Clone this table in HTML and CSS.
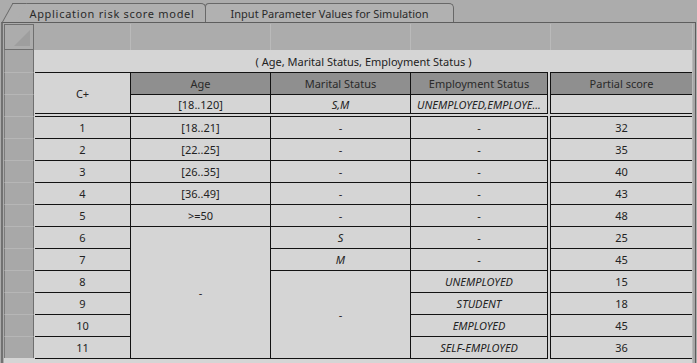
FILE: index.html
```html
<!DOCTYPE html>
<html>
<head>
<meta charset="utf-8">
<title>Application risk score model</title>
<link rel="stylesheet" href="styles.css">
</head>
<body>
<div class="tabs">
  <div class="tab tab-active">Application risk score model</div>
  <div class="tab tab-other">Input Parameter Values for Simulation</div>
</div>
<div class="frame">
  <div class="sheet">
    <div class="corner"><svg width="16" height="16" viewBox="0 0 16 16"><polygon points="0,16 16,16 16,0" fill="#9e9e9e"/></svg></div>
    <div class="colheads">
      <div class="ch ch1"></div>
      <div class="ch ch2"></div>
      <div class="ch ch3"></div>
      <div class="ch ch4"></div>
      <div class="ch ch5"></div>
    </div>
    <div class="gutter gutter-top"></div>
    <div class="rowheads">
      <div class="rh"></div><div class="rh"></div><div class="rh"></div><div class="rh"></div>
      <div class="rh"></div><div class="rh"></div><div class="rh"></div><div class="rh"></div>
      <div class="rh"></div><div class="rh"></div><div class="rh"></div><div class="rh"></div>
      <div class="rh"></div><div class="rh"></div>
    </div>
    <div class="content">
      <table class="grid">
        <colgroup>
          <col class="col-a"><col class="col-b"><col class="col-c"><col class="col-d"><col class="col-gap"><col class="col-e">
        </colgroup>
        <tr class="title"><td colspan="6">( Age, Marital Status, Employment Status )</td></tr>
        <tr class="head">
          <td class="cp" rowspan="2">C+</td>
          <td class="hd">Age</td>
          <td class="hd">Marital Status</td>
          <td class="hd">Employment Status</td>
          <td class="gap" rowspan="2"></td>
          <td class="hd e">Partial score</td>
        </tr>
        <tr class="vals">
          <td>[18..120]</td>
          <td class="i">S,M</td>
          <td class="i">UNEMPLOYED,EMPLOYE...</td>
          <td class="e"></td>
        </tr>
        <tr class="sp"><td colspan="6"></td></tr>
        <tr class="row first"><td>1</td><td>[18..21]</td><td>-</td><td>-</td><td class="gap"></td><td class="e">32</td></tr>
        <tr class="row"><td>2</td><td>[22..25]</td><td>-</td><td>-</td><td class="gap"></td><td class="e">35</td></tr>
        <tr class="row"><td>3</td><td>[26..35]</td><td>-</td><td>-</td><td class="gap"></td><td class="e">40</td></tr>
        <tr class="row"><td>4</td><td>[36..49]</td><td>-</td><td>-</td><td class="gap"></td><td class="e">43</td></tr>
        <tr class="row"><td>5</td><td>&gt;=50</td><td>-</td><td>-</td><td class="gap"></td><td class="e">48</td></tr>
        <tr class="row"><td>6</td><td rowspan="6">-</td><td class="i">S</td><td>-</td><td class="gap"></td><td class="e">25</td></tr>
        <tr class="row"><td>7</td><td class="i">M</td><td>-</td><td class="gap"></td><td class="e">45</td></tr>
        <tr class="row"><td>8</td><td rowspan="4">-</td><td class="i">UNEMPLOYED</td><td class="gap"></td><td class="e">15</td></tr>
        <tr class="row"><td>9</td><td class="i">STUDENT</td><td class="gap"></td><td class="e">18</td></tr>
        <tr class="row"><td>10</td><td class="i">EMPLOYED</td><td class="gap"></td><td class="e">45</td></tr>
        <tr class="row"><td>11</td><td class="i">SELF-EMPLOYED</td><td class="gap"></td><td class="e">36</td></tr>
      </table>
    </div>
    <div class="gutter"></div>
  </div>
</div>
</body>
</html>
```

FILE: styles.css
```css
* { box-sizing: border-box; }
html, body { margin: 0; padding: 0; }
body {
  width: 697px;
  height: 363px;
  overflow: hidden;
  background: #acacac;
  font-family: "Noto Sans", "DejaVu Sans", sans-serif;
  font-size: 11px;
  color: #1f1f1f;
}

/* tabs */
.tabs {
  display: flex;
  align-items: flex-end;
  height: 22px;
  padding-left: 13px;
}
.tab {
  position: relative;
  height: 19px;
  border: 1px solid #686868;
  border-bottom: none;
  display: flex;
  align-items: center;
  justify-content: center;
  font-size: 11px;
  color: #2a2a2a;
  background: #afafaf;
}
.tab-active {
  width: 193px;
  border-left: none;
  border-top-right-radius: 5px;
  letter-spacing: 0.7px;
  padding-left: 6px;
}
.tab-active::before {
  content: "";
  position: absolute;
  left: -11px;
  top: -1px;
  bottom: 0;
  width: 13px;
  border-left: 1px solid #686868;
  border-top: 1px solid #686868;
  background: #afafaf;
  transform: skewX(-29deg);
  transform-origin: bottom left;
}
.tab-other {
  width: 249px;
  margin-left: -1px;
  border-top-left-radius: 4px;
  border-top-right-radius: 5px;
  background: #b1b1b1;
}

/* frame */
.frame {
  width: 695px;
  height: 341px;
  margin-left: 1px;
  border-left: 2px solid #727272;
  border-top: 1px solid #5e5e5e;
  border-right: 1px solid #5e5e5e;
  padding: 1px 0 0 1px;
}
.sheet {
  display: grid;
  grid-template-columns: 30px 658px 3px;
  grid-template-rows: 26px 314px;
  background: #d5d5d5;
}
.corner {
  border: 1px solid #6f6f6f;
  background: #acacac;
  display: flex;
  align-items: flex-end;
  justify-content: flex-end;
  padding: 0 3px 3px 0;
}
.corner svg { display: block; }
.colheads {
  display: flex;
  background: #acacac;
}
.ch { border-right: 1px solid #bababa; }
.ch1 { width: 97px; }
.ch2, .ch3, .ch4 { width: 140px; }
.ch5 { flex: 1; border-right: none; }
.gutter { background: #a7a7a7; border-left: 1px solid #b9b9b9; }
.gutter-top { background: #acacac; }

.rowheads {
  display: flex;
  flex-direction: column;
  align-self: start;
}
.rh {
  height: 22px;
  background: #a8a8a8;
  border-left: 1px solid #7c7c7c;
  border-right: 1px solid #6f6f6f;
}
.rh + .rh { border-top: 1px solid #b6b6b6; }

.content {
  background: #d5d5d5;
  padding-left: 1px;
}

/* table */
.grid {
  border-collapse: separate;
  border-spacing: 0;
  table-layout: fixed;
  width: 657px;
}
.col-a { width: 96px; }
.col-b { width: 140px; }
.col-c { width: 140px; }
.col-d { width: 137px; }
.col-gap { width: 2px; }
.col-e { width: 142px; }

.grid td {
  padding: 0;
  text-align: center;
  vertical-align: middle;
  white-space: nowrap;
  overflow: hidden;
  border-right: 1px solid #121212;
  border-bottom: 1px solid #121212;
  color: #222;
}
.grid td.e { border-left: 1px solid #121212; border-right: none; }
.grid td.gap { border: none; }
.grid td.i { font-style: italic; }

.grid tr.title { height: 22px; }
.grid tr.title td { border: none; padding-top: 1px; }
.grid tr.head { height: 23px; }
.grid tr.head td { border-top: 1px solid #121212; }
.grid tr.head td.gap { border: none; }
.grid td.hd { background: #8f8f8f; color: #2a2a2a; }
.grid tr.vals { height: 19px; }
.grid tr.sp { height: 2px; }
.grid tr.sp td { border: none; height: 2px; font-size: 0; line-height: 0; }
.grid tr.row { height: 22px; }
.grid tr.first { height: 23px; }
.grid tr.first td { border-top: 1px solid #121212; }
.grid tr.first td.gap { border: none; }
```
